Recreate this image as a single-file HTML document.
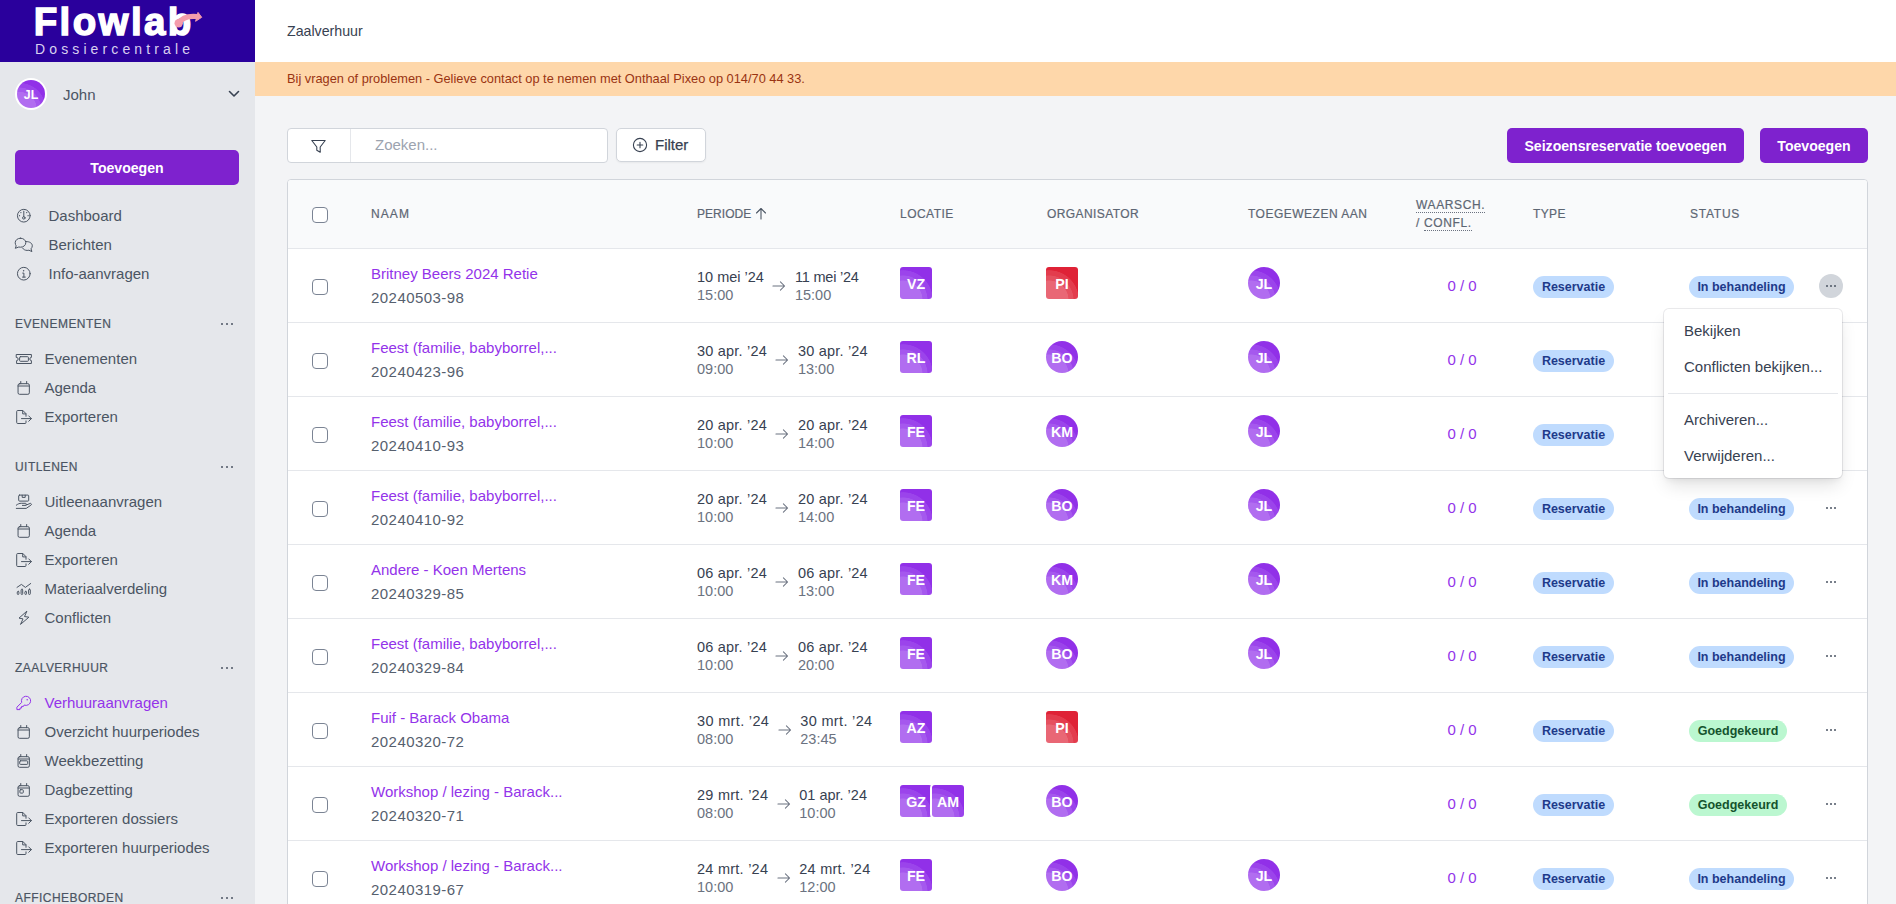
<!DOCTYPE html>
<html lang="nl">
<head>
<meta charset="utf-8">
<title>Zaalverhuur - Flowlab Dossiercentrale</title>
<style>
*{box-sizing:border-box;margin:0;padding:0}
html,body{width:1896px;height:904px;overflow:hidden}
body{font-family:"Liberation Sans",sans-serif;background:#f3f4f6;color:#374151;position:relative;font-size:15px}
.abs{position:absolute}
/* ---------- sidebar ---------- */
#sb{position:absolute;left:0;top:0;width:255px;height:904px;background:#e5e7eb;overflow:hidden}
#logo{position:absolute;left:0;top:0;width:255px;height:62px;background:#2a009c}
#logo .fl{position:absolute;left:33.7px;top:0px;font-size:38.5px;line-height:44px;font-weight:bold;color:#fff;letter-spacing:2.4px;-webkit-text-stroke:1.4px #fff}
#logo .dc{position:absolute;left:35px;top:41px;font-size:14px;line-height:16px;color:#d9d0f0;letter-spacing:4.12px}
.nav{position:absolute;left:0;width:255px;height:22px;line-height:22px;font-size:15px;color:#4b5563;white-space:nowrap}
.nav svg{position:absolute;left:16px;top:3.4px;width:16px;height:16px;stroke:#4b5563;fill:none;stroke-width:1;stroke-linecap:round;stroke-linejoin:round;overflow:visible}
.nav span{position:absolute;left:44.5px;top:0}
.nav.t span{left:48.5px}
.nav.on{color:#9333ea}
.nav.on svg{stroke:#9333ea}
.sec{-webkit-text-stroke:.2px #4b5563;position:absolute;left:15px;height:18px;line-height:18px;font-size:12px;letter-spacing:.45px;color:#4b5563;white-space:nowrap}
.dots3{position:absolute;left:221px;width:12px;height:2px}
.dots3 i,.rdots i{position:absolute;top:0;width:2px;height:2px;border-radius:50%;background:#4b5563}
.dots3 i:nth-child(1){left:0}.dots3 i:nth-child(2){left:5px}.dots3 i:nth-child(3){left:10px}
/* ---------- main ---------- */
#top{position:absolute;left:255px;top:0;width:1641px;height:62px;background:#fff}
#ban{position:absolute;left:255px;top:62px;width:1641px;height:34px;background:#fed7aa}
.btn{padding-top:1px;position:absolute;background:#7e22ce;color:#fff;font-weight:bold;border-radius:5px;text-align:center;white-space:nowrap}
#tbl{position:absolute;left:287px;top:179px;width:1581px;height:740px;background:#fff;border:1px solid #d1d5db;border-radius:4px 4px 0 0;overflow:hidden}
#thead{position:absolute;left:0;top:0;width:1581px;height:69px;background:#f9fafb;border-bottom:1px solid #e5e7eb}
.th{-webkit-text-stroke:.2px #5d6673;position:absolute;font-size:12px;letter-spacing:.75px;color:#5d6673;line-height:14px;white-space:nowrap}
.row{position:absolute;left:0;width:1581px;height:74px;border-bottom:1px solid #e5e7eb}
.cb{position:absolute;left:24px;width:16px;height:16px;border:1px solid #7b8494;border-radius:4px;background:#fff}
.nm{position:absolute;left:83px;top:14px;font-size:15px;line-height:22px;color:#9333ea;white-space:nowrap}
.id{position:absolute;left:83px;top:38px;font-size:15px;line-height:22px;color:#56606e;white-space:nowrap;letter-spacing:.45px}
.per{position:absolute;left:409px;top:19px;display:flex;align-items:flex-start}
.d{font-size:14.5px;line-height:18px;color:#374151;white-space:nowrap}
.d b{display:block;font-weight:normal;color:#6b7280}
.ar{width:14px;height:12px;margin:12px 8.500px 0 8.500px;flex:none}
.av{position:absolute;top:18px;width:32px;height:32px;border-radius:3px;color:#fff;font-weight:bold;font-size:14.2px;line-height:34.5px;text-align:center;
 background:radial-gradient(circle at 3px 33px,#b16df0 0,#b16df0 19.2px,#a558ee 19.8px,#a558ee 24.2px,#9b44eb 24.8px,#9b44eb 29.4px,#9130e8 30px)}
.av.c{border-radius:50%}
.av.r{background:radial-gradient(circle at 3px 33px,#e96775 0,#e96775 19.2px,#e5505f 19.8px,#e5505f 24.2px,#e33c4d 24.8px,#e33c4d 29.4px,#df2236 30px)}
.cnt{position:absolute;left:1141px;top:26px;width:66px;text-align:center;font-size:15px;line-height:22px;color:#9333ea;white-space:nowrap}
.bd{position:absolute;top:27px;height:22px;line-height:22px;border-radius:11px;font-size:12.5px;font-weight:bold;text-align:center;white-space:nowrap}
.bd.b{background:#bfdbfe;color:#1e3a8a}
.bd.g{background:#bbf7d0;color:#14532d}
.rdots{position:absolute;left:1538px;top:36px;width:10px;height:2px}
.rdots i:nth-child(1){left:0}.rdots i:nth-child(2){left:4px}.rdots i:nth-child(3){left:8px}
#menu{position:absolute;left:1664px;top:309px;width:178px;height:169px;background:#fff;border-radius:5px;box-shadow:0 0 0 1px rgba(17,24,39,.09),0 10px 18px -3px rgba(0,0,0,.12),0 4px 6px -2px rgba(0,0,0,.06)}
#menu div{position:absolute;left:20px;font-size:15px;line-height:22px;color:#374151;white-space:nowrap}
#menu hr{position:absolute;left:4px;width:170px;top:84px;border:0;border-top:1px solid #e5e7eb}
</style>
</head>
<body>
<div id="sb">
 <div id="logo">
  <div class="fl">Flowlab</div>
  <svg class="abs" style="left:170px;top:6px" width="36" height="24" viewBox="0 0 36 24"><path d="M8.600 17.200 C11.500 12.300 17 9.500 27 10.500" fill="none" stroke="#f49cab" stroke-width="5.200" stroke-linecap="round"/><circle cx="8.700" cy="17.200" r="4.200" fill="#f49cab"/><path d="M28 6.400 L31.700 11.300 L25.600 15.300 Z" fill="#f49cab" stroke="#f49cab" stroke-width="1" stroke-linejoin="round"/></svg>
  <div class="dc">Dossiercentrale</div>
 </div>
 <div class="abs" style="left:15px;top:78px;width:32px;height:32px;border-radius:50%;background:#fff"></div>
 <div class="abs" style="left:17px;top:80px;width:28px;height:28px;border-radius:50%;background:radial-gradient(circle at 2.6px 29px,#b16df0 0,#b16df0 16.8px,#a558ee 17.3px,#a558ee 21.2px,#9b44eb 21.7px,#9b44eb 25.7px,#9130e8 26.2px);color:#fff;font:bold 12.4px/30px 'Liberation Sans',sans-serif;text-align:center">JL</div>
 <div class="abs" style="left:63px;top:84px;font-size:15px;line-height:22px;color:#4b5563">John</div>
 <svg class="abs" style="left:228px;top:90px" width="12" height="8" viewBox="0 0 12 8"><path d="M1.5 1.5 L6 6 L10.5 1.5" fill="none" stroke="#374151" stroke-width="1.6" stroke-linecap="round" stroke-linejoin="round"/></svg>
 <div class="btn" style="left:15px;top:150px;width:224px;height:35px;font-size:14.1px;line-height:35px">Toevoegen</div>

 <div class="nav t" style="top:205px"><svg viewBox="0 0 16 16"><circle cx="7.800" cy="7.700" r="6.350"/><path d="M7.800 3.200v5.400"/><circle cx="7.800" cy="9.900" r="1.250"/><path d="M3.500 7.700h.01M12.100 7.700h.01M4.900 4.600h.01M10.700 4.600h.01" stroke-width="1.300"/></svg><span>Dashboard</span></div>
 <div class="nav t" style="top:234px"><svg viewBox="-2 0 20 16" style="left:14px;width:20px"><path d="M4.500 1.200c3 0 5.300 2 5.300 4.500s-2.300 4.500-5.300 4.500c-.6 0-1.200-.1-1.700-.2L-.7 11.300l.9-2.400C-.4 8-.8 6.900-.8 5.700c0-2.500 2.300-4.500 5.300-4.500z"/><path d="M10.400 4.600c3.200-.2 5.900 1.700 5.900 4.200 0 1.200-.5 2.200-1.300 3l.9 2.800-3-1.400c-.6.2-1.200.2-1.800.2-2 0-3.700-.9-4.500-2.300"/></svg><span>Berichten</span></div>
 <div class="nav t" style="top:263px"><svg viewBox="0 0 16 16"><circle cx="7.800" cy="7.700" r="6.350"/><path d="M6.700 7.100h1.200v4M6.500 11.100h2.800"/><path d="M7.600 4.700h.01" stroke-width="1.500"/></svg><span>Info-aanvragen</span></div>

 <div class="sec" style="top:315px">EVENEMENTEN</div><div class="dots3" style="top:323px"><i></i><i></i><i></i></div>
 <div class="nav" style="top:348px"><svg viewBox="0 0 16 16"><path d="M.6 3.500h14.800v2.900a1.600 1.600 0 0 0 0 3.200v2.900H.6V9.600a1.600 1.600 0 0 0 0-3.200z"/><rect x="3.600" y="5.700" width="8.800" height="4.600" rx=".8"/></svg><span>Evenementen</span></div>
 <div class="nav" style="top:377px"><svg viewBox="0 0 16 16"><rect x="2.050" y="3.700" width="11.300" height="10.600" rx="1.500"/><path d="M2.050 6h11.300M4.750 1.500v2.200M10.650 1.500v2.200"/></svg><span>Agenda</span></div>
 <div class="nav" style="top:406px"><svg viewBox="0 0 16 16"><path d="M10 7.300V4.700L6.900 1.500H1.700a1 1 0 0 0-1 1v11a1 1 0 0 0 1 1H9a1 1 0 0 0 1-1v-1.600M6.700 1.700v3.200h3.100M5.500 9.600h9.800M12.700 6.900l2.700 2.700-2.700 2.700"/></svg><span>Exporteren</span></div>

 <div class="sec" style="top:458px">UITLENEN</div><div class="dots3" style="top:466px"><i></i><i></i><i></i></div>
 <div class="nav" style="top:491px"><svg viewBox="0 0 16 16"><rect x="2.700" y="1.100" width="10" height="6" rx=".8"/><path d="M6.200 1.200v2.200h3V1.200"/><path d="M.3 11.200C2 9.800 3.500 9.300 5.300 9.300h4a1.050 1.050 0 0 1 0 2.100H6.400M9.800 11.200l4.200-1.700a.95.950 0 0 1 .9 1.700L10.200 14.400H.3"/></svg><span>Uitleenaanvragen</span></div>
 <div class="nav" style="top:520px"><svg viewBox="0 0 16 16"><rect x="2.050" y="3.700" width="11.300" height="10.600" rx="1.500"/><path d="M2.050 6h11.300M4.750 1.500v2.200M10.650 1.500v2.200"/></svg><span>Agenda</span></div>
 <div class="nav" style="top:549px"><svg viewBox="0 0 16 16"><path d="M10 7.300V4.700L6.900 1.500H1.700a1 1 0 0 0-1 1v11a1 1 0 0 0 1 1H9a1 1 0 0 0 1-1v-1.600M6.700 1.700v3.200h3.100M5.500 9.600h9.800M12.700 6.900l2.700 2.700-2.700 2.700"/></svg><span>Exporteren</span></div>
 <div class="nav" style="top:578px"><svg viewBox="0 0 16 16"><path d="M1 6.400l4.400-3 4 3 5.300-3.900"/><rect x="1.300" y="10.300" width="1.600" height="3.200" rx=".8"/><rect x="5.100" y="8.200" width="1.600" height="5.300" rx=".8"/><rect x="8.900" y="10.300" width="1.600" height="3.200" rx=".8"/><rect x="12.600" y="8.200" width="1.700" height="5.300" rx=".8"/></svg><span>Materiaalverdeling</span></div>
 <div class="nav" style="top:607px"><svg viewBox="0 0 16 16"><path d="M10.600 1.400L3 8.100l4 .8-2.500 5.500 8.400-7.200-4-.6z"/></svg><span>Conflicten</span></div>

 <div class="sec" style="top:659px">ZAALVERHUUR</div><div class="dots3" style="top:667px"><i></i><i></i><i></i></div>
 <div class="nav on" style="top:692px"><svg viewBox="0 0 16 16"><path d="M8.500 10.200a4.600 4.600 0 1 0-2.800-2.800L.9 12.200v2.400h3.100v-1.600h1.600v-1.600h1.500z"/><path d="M11.200 4.700h.01" stroke-width="1.500"/></svg><span>Verhuuraanvragen</span></div>
 <div class="nav" style="top:721px"><svg viewBox="0 0 16 16"><rect x="2.050" y="3.700" width="11.300" height="10.600" rx="1.500"/><path d="M2.050 6h11.300M4.750 1.500v2.200M10.650 1.500v2.200"/></svg><span>Overzicht huurperiodes</span></div>
 <div class="nav" style="top:750px"><svg viewBox="0 0 16 16"><rect x="2.050" y="3.700" width="11.300" height="10.600" rx="1.500"/><path d="M2.050 6h11.300M4.750 1.500v2.200M10.650 1.500v2.200"/><rect x="3.700" y="7.800" width="8" height="3.600" rx=".8"/></svg><span>Weekbezetting</span></div>
 <div class="nav" style="top:779px"><svg viewBox="0 0 16 16"><rect x="2.050" y="3.700" width="11.300" height="10.600" rx="1.500"/><path d="M2.050 6h11.300M4.750 1.500v2.200M10.650 1.500v2.200"/><rect x="3.900" y="7.700" width="3.400" height="3.400" rx=".8"/></svg><span>Dagbezetting</span></div>
 <div class="nav" style="top:808px"><svg viewBox="0 0 16 16"><path d="M10 7.300V4.700L6.900 1.500H1.700a1 1 0 0 0-1 1v11a1 1 0 0 0 1 1H9a1 1 0 0 0 1-1v-1.600M6.700 1.700v3.200h3.100M5.500 9.600h9.800M12.700 6.900l2.700 2.700-2.700 2.700"/></svg><span>Exporteren dossiers</span></div>
 <div class="nav" style="top:837px"><svg viewBox="0 0 16 16"><path d="M10 7.300V4.700L6.900 1.500H1.700a1 1 0 0 0-1 1v11a1 1 0 0 0 1 1H9a1 1 0 0 0 1-1v-1.600M6.700 1.700v3.200h3.100M5.500 9.600h9.800M12.700 6.900l2.700 2.700-2.700 2.700"/></svg><span>Exporteren huurperiodes</span></div>

 <div class="sec" style="top:889px">AFFICHEBORDEN</div><div class="dots3" style="top:897px"><i></i><i></i><i></i></div>
</div>

<!--MAINSTART-->
<div id="top"><div class="abs" style="left:32px;top:20.4px;font-size:14.2px;line-height:22px;color:#374151">Zaalverhuur</div></div>
<div id="ban"><div class="abs" style="left:32px;top:6px;font-size:12.8px;line-height:22px;color:#9a3412;white-space:nowrap">Bij vragen of problemen - Gelieve contact op te nemen met Onthaal Pixeo op 014/70 44 33.</div></div>
<div class="abs" style="left:287px;top:128px;width:321px;height:35px;background:#fff;border:1px solid #d1d5db;border-radius:4px"></div>
<div class="abs" style="left:350px;top:129px;width:1px;height:33px;background:#e5e7eb"></div>
<svg class="abs" style="left:310px;top:137.7px" width="17" height="17" viewBox="0 0 17 17"><path d="M1.800 2.500h13.400L10.200 9v5.200L6.800 12.200V9z" fill="none" stroke="#374151" stroke-width="1.100" stroke-linejoin="round"/></svg>
<div class="abs" style="left:375px;top:134px;font-size:15px;line-height:22px;color:#9ca3af">Zoeken...</div>
<div class="abs" style="left:616px;top:128px;width:90px;height:34px;background:#fff;border:1px solid #d1d5db;border-radius:5px;box-shadow:0 1px 2px rgba(0,0,0,.05)"></div>
<svg class="abs" style="left:632px;top:137px" width="16" height="16" viewBox="0 0 16 16"><circle cx="8" cy="8" r="6.600" fill="none" stroke="#374151" stroke-width="1.100"/><path d="M8 5.200v5.600M5.200 8h5.600" stroke="#374151" stroke-width="1.100" stroke-linecap="round"/></svg>
<div class="abs" style="left:655px;top:134px;font-size:15px;line-height:22px;color:#374151;-webkit-text-stroke:.25px #374151">Filter</div>
<div class="btn" style="left:1507px;top:128px;width:237px;height:35px;font-size:14.1px;line-height:35px">Seizoensreservatie toevoegen</div>
<div class="btn" style="left:1760px;top:128px;width:108px;height:35px;font-size:14.1px;line-height:35px">Toevoegen</div>
<div id="tbl">
<div id="thead">
<div class="cb" style="top:27px"></div>
<div class="th" style="left:83px;top:27px;letter-spacing:1.1px">NAAM</div>
<div class="th" style="left:409px;top:27px;letter-spacing:0.03px">PERIODE</div>
<svg class="abs" style="left:467px;top:27px" width="12" height="13" viewBox="0 0 12 13"><path d="M6 12V1.500M1.500 6L6 1.500 10.500 6" fill="none" stroke="#4b5563" stroke-width="1.100" stroke-linecap="round" stroke-linejoin="round"/></svg>
<div class="th" style="left:612px;top:27px;letter-spacing:0.46px">LOCATIE</div>
<div class="th" style="left:759px;top:27px;letter-spacing:0.41px">ORGANISATOR</div>
<div class="th" style="left:960px;top:27px;letter-spacing:0.5px">TOEGEWEZEN AAN</div>
<div class="th" style="left:1128px;top:16px;line-height:18px;letter-spacing:.63px"><span style="border-bottom:1px dotted #6b7280">WAARSCH.</span><br>/ <span style="border-bottom:1px dotted #6b7280">CONFL.</span></div>
<div class="th" style="left:1245px;top:27px;letter-spacing:0.38px">TYPE</div>
<div class="th" style="left:1402px;top:27px;letter-spacing:0.75px">STATUS</div>
</div>
<div class="row" style="top:69px">
<div class="cb" style="top:30px"></div>
<div class="nm">Britney Beers 2024 Retie</div><div class="id">20240503-98</div>
<div class="per"><div class="d"><span>10 mei ’24</span><b>15:00</b></div><svg class="ar" viewBox="0 0 15 12"><path d="M1 6h12.500M9 1.500L13.500 6 9 10.500" fill="none" stroke="#6b7280" stroke-width="1.100" stroke-linecap="round" stroke-linejoin="round"/></svg><div class="d"><span style="letter-spacing:-0.2px">11 mei ’24</span><b>15:00</b></div></div>
<div class="av" style="left:612px">VZ</div>
<div class="av r" style="left:758px">PI</div>
<div class="av c" style="left:960px">JL</div>
<div class="cnt">0 / 0</div>
<div class="bd b" style="left:1245px;width:81px">Reservatie</div>
<div class="bd b" style="left:1401px;width:105px">In behandeling</div>
<div class="abs" style="left:1531px;top:25px;width:24px;height:24px;border-radius:50%;background:#d1d5db"></div>
<div class="rdots"><i></i><i></i><i></i></div>
</div>
<div class="row" style="top:143px">
<div class="cb" style="top:30px"></div>
<div class="nm">Feest (familie, babyborrel,...</div><div class="id">20240423-96</div>
<div class="per"><div class="d"><span style="letter-spacing:0.2px">30 apr. ’24</span><b>09:00</b></div><svg class="ar" viewBox="0 0 15 12"><path d="M1 6h12.500M9 1.500L13.500 6 9 10.500" fill="none" stroke="#6b7280" stroke-width="1.100" stroke-linecap="round" stroke-linejoin="round"/></svg><div class="d"><span style="letter-spacing:0.2px">30 apr. ’24</span><b>13:00</b></div></div>
<div class="av" style="left:612px">RL</div>
<div class="av c" style="left:758px">BO</div>
<div class="av c" style="left:960px">JL</div>
<div class="cnt">0 / 0</div>
<div class="bd b" style="left:1245px;width:81px">Reservatie</div>
<div class="bd b" style="left:1401px;width:105px">In behandeling</div>
<div class="rdots"><i></i><i></i><i></i></div>
</div>
<div class="row" style="top:217px">
<div class="cb" style="top:30px"></div>
<div class="nm">Feest (familie, babyborrel,...</div><div class="id">20240410-93</div>
<div class="per"><div class="d"><span style="letter-spacing:0.2px">20 apr. ’24</span><b>10:00</b></div><svg class="ar" viewBox="0 0 15 12"><path d="M1 6h12.500M9 1.500L13.500 6 9 10.500" fill="none" stroke="#6b7280" stroke-width="1.100" stroke-linecap="round" stroke-linejoin="round"/></svg><div class="d"><span style="letter-spacing:0.2px">20 apr. ’24</span><b>14:00</b></div></div>
<div class="av" style="left:612px">FE</div>
<div class="av c" style="left:758px">KM</div>
<div class="av c" style="left:960px">JL</div>
<div class="cnt">0 / 0</div>
<div class="bd b" style="left:1245px;width:81px">Reservatie</div>
<div class="bd b" style="left:1401px;width:105px">In behandeling</div>
<div class="rdots"><i></i><i></i><i></i></div>
</div>
<div class="row" style="top:291px">
<div class="cb" style="top:30px"></div>
<div class="nm">Feest (familie, babyborrel,...</div><div class="id">20240410-92</div>
<div class="per"><div class="d"><span style="letter-spacing:0.2px">20 apr. ’24</span><b>10:00</b></div><svg class="ar" viewBox="0 0 15 12"><path d="M1 6h12.500M9 1.500L13.500 6 9 10.500" fill="none" stroke="#6b7280" stroke-width="1.100" stroke-linecap="round" stroke-linejoin="round"/></svg><div class="d"><span style="letter-spacing:0.2px">20 apr. ’24</span><b>14:00</b></div></div>
<div class="av" style="left:612px">FE</div>
<div class="av c" style="left:758px">BO</div>
<div class="av c" style="left:960px">JL</div>
<div class="cnt">0 / 0</div>
<div class="bd b" style="left:1245px;width:81px">Reservatie</div>
<div class="bd b" style="left:1401px;width:105px">In behandeling</div>
<div class="rdots"><i></i><i></i><i></i></div>
</div>
<div class="row" style="top:365px">
<div class="cb" style="top:30px"></div>
<div class="nm">Andere - Koen Mertens</div><div class="id">20240329-85</div>
<div class="per"><div class="d"><span style="letter-spacing:0.2px">06 apr. ’24</span><b>10:00</b></div><svg class="ar" viewBox="0 0 15 12"><path d="M1 6h12.500M9 1.500L13.500 6 9 10.500" fill="none" stroke="#6b7280" stroke-width="1.100" stroke-linecap="round" stroke-linejoin="round"/></svg><div class="d"><span style="letter-spacing:0.2px">06 apr. ’24</span><b>13:00</b></div></div>
<div class="av" style="left:612px">FE</div>
<div class="av c" style="left:758px">KM</div>
<div class="av c" style="left:960px">JL</div>
<div class="cnt">0 / 0</div>
<div class="bd b" style="left:1245px;width:81px">Reservatie</div>
<div class="bd b" style="left:1401px;width:105px">In behandeling</div>
<div class="rdots"><i></i><i></i><i></i></div>
</div>
<div class="row" style="top:439px">
<div class="cb" style="top:30px"></div>
<div class="nm">Feest (familie, babyborrel,...</div><div class="id">20240329-84</div>
<div class="per"><div class="d"><span style="letter-spacing:0.2px">06 apr. ’24</span><b>10:00</b></div><svg class="ar" viewBox="0 0 15 12"><path d="M1 6h12.500M9 1.500L13.500 6 9 10.500" fill="none" stroke="#6b7280" stroke-width="1.100" stroke-linecap="round" stroke-linejoin="round"/></svg><div class="d"><span style="letter-spacing:0.2px">06 apr. ’24</span><b>20:00</b></div></div>
<div class="av" style="left:612px">FE</div>
<div class="av c" style="left:758px">BO</div>
<div class="av c" style="left:960px">JL</div>
<div class="cnt">0 / 0</div>
<div class="bd b" style="left:1245px;width:81px">Reservatie</div>
<div class="bd b" style="left:1401px;width:105px">In behandeling</div>
<div class="rdots"><i></i><i></i><i></i></div>
</div>
<div class="row" style="top:513px">
<div class="cb" style="top:30px"></div>
<div class="nm">Fuif - Barack Obama</div><div class="id">20240320-72</div>
<div class="per"><div class="d"><span style="letter-spacing:0.34px">30 mrt. ’24</span><b>08:00</b></div><svg class="ar" viewBox="0 0 15 12"><path d="M1 6h12.500M9 1.500L13.500 6 9 10.500" fill="none" stroke="#6b7280" stroke-width="1.100" stroke-linecap="round" stroke-linejoin="round"/></svg><div class="d"><span style="letter-spacing:0.34px">30 mrt. ’24</span><b>23:45</b></div></div>
<div class="av" style="left:612px">AZ</div>
<div class="av r" style="left:758px">PI</div>
<div class="cnt">0 / 0</div>
<div class="bd b" style="left:1245px;width:81px">Reservatie</div>
<div class="bd g" style="left:1401px;width:98px">Goedgekeurd</div>
<div class="rdots"><i></i><i></i><i></i></div>
</div>
<div class="row" style="top:587px">
<div class="cb" style="top:30px"></div>
<div class="nm">Workshop / lezing - Barack...</div><div class="id">20240320-71</div>
<div class="per"><div class="d"><span style="letter-spacing:0.25px">29 mrt. ’24</span><b>08:00</b></div><svg class="ar" viewBox="0 0 15 12"><path d="M1 6h12.500M9 1.500L13.500 6 9 10.500" fill="none" stroke="#6b7280" stroke-width="1.100" stroke-linecap="round" stroke-linejoin="round"/></svg><div class="d"><span>01 apr. ’24</span><b>10:00</b></div></div>
<div class="av" style="left:612px">GZ</div>
<div class="av" style="left:644px;box-shadow:0 0 0 2px #fff">AM</div>
<div class="av c" style="left:758px">BO</div>
<div class="cnt">0 / 0</div>
<div class="bd b" style="left:1245px;width:81px">Reservatie</div>
<div class="bd g" style="left:1401px;width:98px">Goedgekeurd</div>
<div class="rdots"><i></i><i></i><i></i></div>
</div>
<div class="row" style="top:661px">
<div class="cb" style="top:30px"></div>
<div class="nm">Workshop / lezing - Barack...</div><div class="id">20240319-67</div>
<div class="per"><div class="d"><span style="letter-spacing:0.25px">24 mrt. ’24</span><b>10:00</b></div><svg class="ar" viewBox="0 0 15 12"><path d="M1 6h12.500M9 1.500L13.500 6 9 10.500" fill="none" stroke="#6b7280" stroke-width="1.100" stroke-linecap="round" stroke-linejoin="round"/></svg><div class="d"><span style="letter-spacing:0.25px">24 mrt. ’24</span><b>12:00</b></div></div>
<div class="av" style="left:612px">FE</div>
<div class="av c" style="left:758px">BO</div>
<div class="av c" style="left:960px">JL</div>
<div class="cnt">0 / 0</div>
<div class="bd b" style="left:1245px;width:81px">Reservatie</div>
<div class="bd b" style="left:1401px;width:105px">In behandeling</div>
<div class="rdots"><i></i><i></i><i></i></div>
</div>
<div class="row" style="top:735px">
<div class="cb" style="top:30px"></div>
<div class="nm">Workshop / lezing - Barack...</div><div class="id">20240318-66</div>
<div class="per"><div class="d"><span style="letter-spacing:0.25px">23 mrt. ’24</span><b>10:00</b></div><svg class="ar" viewBox="0 0 15 12"><path d="M1 6h12.500M9 1.500L13.500 6 9 10.500" fill="none" stroke="#6b7280" stroke-width="1.100" stroke-linecap="round" stroke-linejoin="round"/></svg><div class="d"><span style="letter-spacing:0.25px">23 mrt. ’24</span><b>12:00</b></div></div>
<div class="av" style="left:612px">FE</div>
<div class="av c" style="left:758px">BO</div>
<div class="av c" style="left:960px">JL</div>
<div class="cnt">0 / 0</div>
<div class="bd b" style="left:1245px;width:81px">Reservatie</div>
<div class="bd b" style="left:1401px;width:105px">In behandeling</div>
<div class="rdots"><i></i><i></i><i></i></div>
</div>
</div>
<div id="menu"><div style="top:11px">Bekijken</div><div style="top:47px">Conflicten bekijken...</div><hr><div style="top:100px">Archiveren...</div><div style="top:136px">Verwijderen...</div></div>
<!--MAINEND-->
</body>
</html>
